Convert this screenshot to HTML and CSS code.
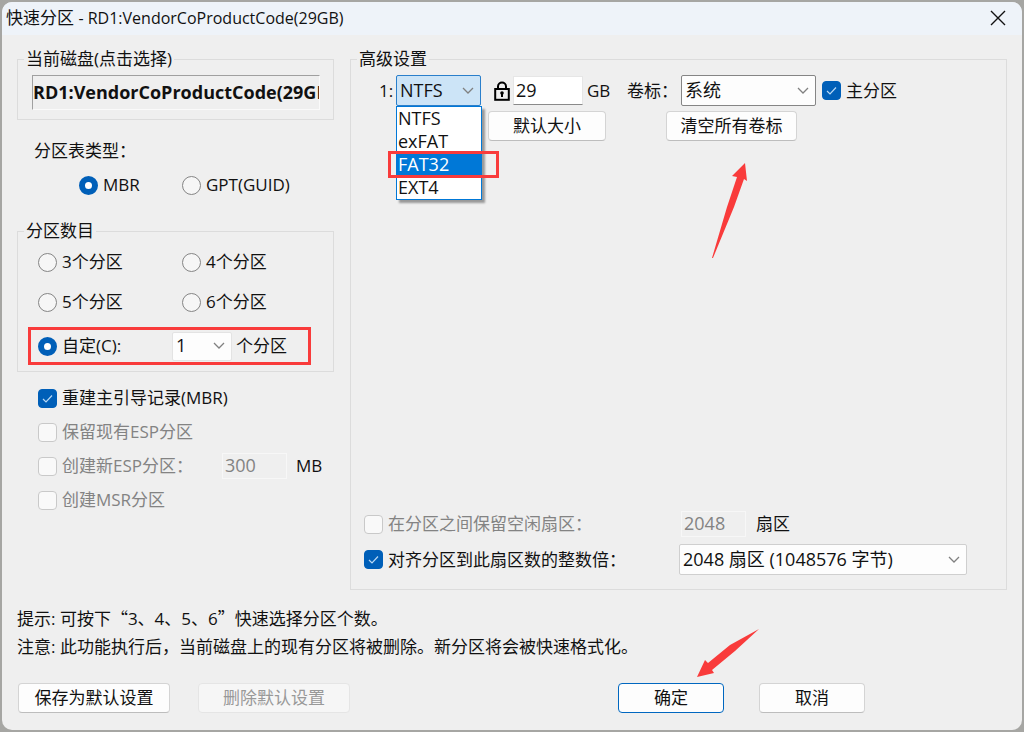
FILE: index.html
```html
<!DOCTYPE html>
<html lang="zh-CN">
<head>
    <meta charset="utf-8">
    <title>快速分区</title>
    <link rel="stylesheet" href="styles.css">
</head>

<body>
    <div class="dialog">
        <header class="titlebar">
            <h1>快速分区 <span>- RD1:VendorCoProductCode(29GB)</span></h1>
            <button class="close" aria-label="关闭">
                <svg viewBox="0 0 16 16"><path d="M1 1 L15 15 M15 1 L1 15"></path></svg>
            </button>
        </header>

        <main>
            <section class="left">
                <fieldset class="disk">
                    <legend>当前磁盘(点击选择)</legend>
                    <div class="disk-name">RD1:VendorCoProductCode(29GB)</div>
                </fieldset>

                <div class="table-type">
                    <p>分区表类型：</p>
                    <div class="radios">
                        <label><input type="radio" name="table" checked>MBR</label>
                        <label><input type="radio" name="table">GPT(GUID)</label>
                    </div>
                </div>

                <fieldset class="count">
                    <legend>分区数目</legend>
                    <div class="count-grid">
                        <label><input type="radio" name="count">3个分区</label>
                        <label><input type="radio" name="count">4个分区</label>
                        <label><input type="radio" name="count">5个分区</label>
                        <label><input type="radio" name="count">6个分区</label>
                    </div>
                    <div class="custom">
                        <label><input type="radio" name="count" checked>自定(C):</label>
                        <select id="num"><option>1</option></select>
                        <label for="num">个分区</label>
                    </div>
                </fieldset>

                <div class="checks">
                    <label><input type="checkbox" checked>重建主引导记录(MBR)</label>
                    <label class="off"><input type="checkbox" disabled>保留现有ESP分区</label>
                    <div class="esp">
                        <label class="off"><input type="checkbox" disabled>创建新ESP分区：</label>
                        <input type="text" id="esp" value="300" disabled>
                        <label for="esp">MB</label>
                    </div>
                    <label class="off"><input type="checkbox" disabled>创建MSR分区</label>
                </div>
            </section>

            <fieldset class="advanced">
                <legend>高级设置</legend>
                <div class="part-row">
                    <label for="fs">1:</label>
                    <div class="combo">
                        <select id="fs" class="active"><option>NTFS</option></select>
                        <ul class="list">
                            <li>NTFS</li>
                            <li>exFAT</li>
                            <li class="selected">FAT32</li>
                            <li>EXT4</li>
                        </ul>
                    </div>
                    <svg class="lock" viewBox="0 0 16 20">
                        <path d="M4 8 V5.5 a4 4 0 0 1 8 0 V8"></path>
                        <rect x="1.2" y="8" width="13.6" height="10.8"></rect>
                        <circle cx="8" cy="12" r="1.8"></circle>
                        <path d="M8 12 V16"></path>
                    </svg>
                    <input type="text" id="size" class="size" value="29">
                    <label for="size" class="unit">GB</label>
                    <label for="vol">卷标：</label>
                    <select id="vol" class="vol"><option>系统</option></select>
                    <label class="primary"><input type="checkbox" checked>主分区</label>
                </div>
                <div class="part-buttons">
                    <button>默认大小</button>
                    <button>清空所有卷标</button>
                </div>

                <div class="sectors">
                    <label class="off"><input type="checkbox" disabled>在分区之间保留空闲扇区：</label>
                    <div class="gap-size">
                        <input type="text" id="gap" value="2048" disabled>
                        <label for="gap">扇区</label>
                    </div>
                    <label><input type="checkbox" checked>对齐分区到此扇区数的整数倍：</label>
                    <select aria-label="对齐扇区数"><option>2048 扇区 (1048576 字节)</option></select>
                </div>
            </fieldset>
        </main>

        <div class="hints">
            <p>提示: 可按下<span class="quote">“</span>3、4、5、6<span class="quote">”</span>快速选择分区个数。</p>
            <p>注意: 此功能执行后，当前磁盘上的现有分区将被删除。新分区将会被快速格式化。</p>
        </div>

        <footer>
            <button class="wide">保存为默认设置</button>
            <button class="wide" disabled>删除默认设置</button>
            <button class="ok">确定</button>
            <button>取消</button>
        </footer>

        <svg class="arrow arrow-up" viewBox="0 0 38 98"><path d="M35 2 L37 20 L34 18 L24 46 L3 97 L2 97 L17 46 L27 16 L22 15 Z"></path></svg>
        <svg class="arrow arrow-down" viewBox="0 0 66 50"><path d="M2 49 L10 32 L13 35 L35 17 L64 1 L40 23 L17 42 L19 45 Z"></path></svg>
    </div>
</body>
</html>
```
FILE: styles.css
```css
* {
    box-sizing: border-box;
}
body {
    margin: 0;
    padding: 2px;
    min-height: 100vh;
    display: flex;
    background: #a6a6a3;
    font-family: "Open Sans", "Noto Sans CJK SC", sans-serif;
    font-size: 17px;
    line-height: 20px;
    color: #111;
}
h1, p, ul {
    margin: 0;
    padding: 0;
    font-size: 17px;
    font-weight: normal;
}
h1 span {
    font-size: 16px;
}
input, select, button {
    margin: 0;
    font: inherit;
    color: inherit;
}

.dialog {
    position: relative;
    flex: 1;
    display: flex;
    flex-direction: column;
    background: #efefef;
    border-radius: 10px;
    overflow: hidden;
}
.titlebar {
    height: 33px;
    flex: none;
    padding: 0 16px 2px 4px;
    display: flex;
    align-items: center;
    justify-content: space-between;
    background: #eef3f9;
}
.close {
    width: 16px;
    height: 16px;
    min-width: 0;
    padding: 0;
    border: 0;
    background: none;
}
.close svg {
    display: block;
    stroke: #111;
    stroke-width: 1.4;
}

main {
    flex: 1;
    display: grid;
    grid-template-columns: 317px 1fr;
    gap: 16px;
    padding: 14px 15px 0 15px;
}
fieldset {
    min-width: 0;
    margin: 0;
    padding: 0;
    border: 1px solid #dcdcdc;
}
legend {
    margin-left: 6px;
    padding: 0 2px;
}
label {
    display: flex;
    align-items: center;
    gap: 5px;
    white-space: nowrap;
}
.off {
    color: #838383;
}

/* radios and checkboxes */
input[type="radio"], input[type="checkbox"] {
    appearance: none;
    flex: none;
    width: 19px;
    height: 19px;
    border: 1px solid #858585;
    background: #f6f6f6;
}
input[type="radio"] {
    border-radius: 50%;
}
input[type="radio"]:checked {
    border: 6px solid #005fb8;
    background: #fff;
}
input[type="checkbox"] {
    border-radius: 4px;
}
input[type="checkbox"]:checked {
    border-color: #005fb8;
    background: #005fb8 url('data:image/svg+xml,<svg xmlns="http://www.w3.org/2000/svg" viewBox="0 0 17 17"><path d="M4 9 L7 12 L13 5.5" fill="none" stroke="%23b8d8f4" stroke-width="1.2"/></svg>') center / 17px no-repeat;
}
input[type="checkbox"]:disabled {
    border-color: #c9c9c9;
    background: #f9f9f9;
}

input[type="text"] {
    padding: 0 2px 2px;
    width: 65px;
    height: 26px;
    font-size: 18px;
    border: 1px solid #e6e6e6;
    background: #fff;
}
input[type="text"]:disabled {
    color: #838383;
    border: 1px solid #f7f7f7;
    background: #efefef;
}
select {
    appearance: none;
    height: 31px;
    padding: 0 4px 2px 3px;
    font-size: 18px;
    border: 1px solid #cfcfcf;
    border-radius: 2px;
    background: #fdfdfd url('data:image/svg+xml,<svg xmlns="http://www.w3.org/2000/svg" viewBox="0 0 12 8"><path d="M1 1 L6 6 L11 1" fill="none" stroke="%23808080" stroke-width="1.3"/></svg>') right 6px center / 12px 8px no-repeat;
}
button {
    min-width: 106px;
    height: 30px;
    padding: 0 0 1px;
    border: 1px solid #d4d4d4;
    border-bottom-color: #bdbdbd;
    border-radius: 4px;
    background: #fdfdfd;
}
button:disabled {
    color: #999;
    border-color: #e5e5e5;
    background: #f6f6f6;
}

/* left column */
.disk {
    height: 71px;
}
.disk-name {
    height: 35px;
    margin: 6px 13px 0 14px;
    overflow: hidden;
    font-size: 18px;
    font-weight: bold;
    line-height: 33px;
    white-space: nowrap;
    border: 1px solid #fafafa;
    border-top-color: #a0a0a0;
    border-left-color: #a0a0a0;
}
.table-type {
    padding: 21px 0 26px 17px;
}
.radios {
    display: grid;
    grid-template-columns: 103px 1fr;
    margin-top: 14px;
    padding-left: 45px;
}
.count {
    height: 151px;
}
.count-grid {
    display: grid;
    grid-template-columns: 144px 1fr;
    gap: 20px 0;
    padding: 11px 0 0 20px;
}
.custom {
    display: grid;
    grid-template-columns: 130px 60px auto;
    column-gap: 4px;
    align-items: center;
    width: 283px;
    height: 38px;
    margin: 15px 0 0 10px;
    padding-left: 7px;
    border: 3px solid #f93b3b;
}
.custom select {
    height: 29px;
    border-color: #e3e3e3;
}
.checks {
    display: grid;
    grid-auto-rows: 20px;
    gap: 14px;
    margin: 16px 0 0 21px;
}
.esp {
    display: grid;
    grid-template-columns: 184px 65px auto;
    grid-template-rows: 20px;
    align-items: center;
}
.esp > :last-child {
    margin-left: 9px;
}

/* advanced settings */
.advanced {
    display: flex;
    flex-direction: column;
}
.part-row {
    display: grid;
    grid-template-columns: 17px 85px 32px 70px 44px 54px 135px auto;
    align-items: center;
    margin: 6px 0 0 28px;
}
.combo {
    position: relative;
}
.combo select {
    display: block;
    width: 100%;
}
.active {
    border-color: #2a7fcb;
    background-color: #cce4f7;
}
.list {
    position: absolute;
    z-index: 1;
    top: 31px;
    left: 0;
    width: 86px;
    font-size: 18px;
    line-height: 23px;
    list-style: none;
    border: 1px solid #0078d7;
    background: #fff;
    box-shadow: 3px 3px 2px #999;
}
.list li {
    padding-left: 1px;
    height: 23px;
}
.list .selected {
    position: relative;
    color: #fff;
    background: #0078d7;
}
.selected::after {
    content: "";
    position: absolute;
    top: -2px;
    left: -9px;
    width: 111px;
    height: 27px;
    box-sizing: border-box;
    border: 3px solid #f93b3b;
}
.lock {
    width: 16px;
    height: 20px;
    margin-left: 13px;
    fill: none;
    stroke: #000;
    stroke-width: 2;
}
.lock circle {
    fill: #000;
    stroke: none;
}
input.size {
    width: 70px;
    height: 29px;
    border-bottom-color: #8a8a8a;
}
.unit {
    padding-left: 4px;
}
.vol {
    border-color: #858585;
}
.primary {
    margin-left: 6px;
}
.part-buttons {
    display: flex;
    gap: 60px;
    margin: 5px 0 0 137px;
}
.part-buttons button {
    width: 118px;
}
.part-buttons button + button {
    width: 131px;
}
.sectors {
    display: grid;
    grid-template-columns: 315px 288px;
    gap: 7px 0;
    align-items: center;
    margin: auto 0 14px 13px;
}
.gap-size {
    display: flex;
    gap: 10px;
    padding-left: 2px;
}

.hints {
    padding: 14px 15px 0;
    line-height: 28px;
}
.quote {
    font-family: "Noto Sans CJK SC", sans-serif;
}
footer {
    display: flex;
    gap: 28px;
    padding: 22px 157px 17px 16px;
}
footer .wide {
    width: 152px;
}
footer .ok {
    margin: 0 7px 0 auto;
    border-color: #0067c0;
}

/* pointers */
.arrow {
    position: absolute;
    fill: #f93b3b;
}
.arrow-up {
    top: 159px;
    left: 708px;
    width: 38px;
    height: 98px;
}
.arrow-down {
    top: 626px;
    left: 693px;
    width: 66px;
    height: 50px;
}
```
